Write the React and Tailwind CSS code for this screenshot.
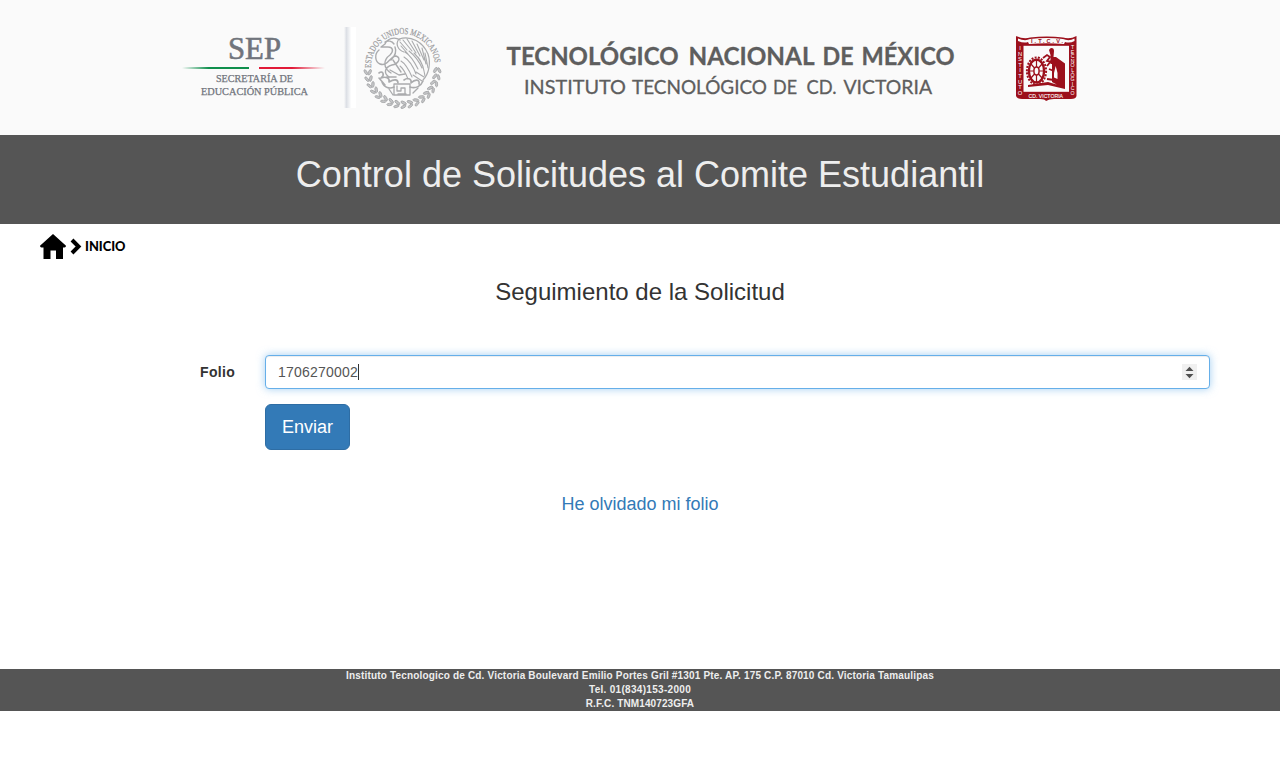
const sans = "font-['Liberation_Sans',Arial,sans-serif]";

function SepLogo() {
  return (
    <svg className="block h-[70px] w-[144px] shrink-0 overflow-visible" viewBox="0 0 144 70" role="img" aria-label="SEP">
      <defs>
        <linearGradient id="green" x1="0" x2="1">
          <stop offset="0" stopColor="#0f8f4d" stopOpacity="0" />
          <stop offset="0.4" stopColor="#0f8f4d" />
          <stop offset="1" stopColor="#0f8f4d" />
        </linearGradient>
        <linearGradient id="red" x1="0" x2="1">
          <stop offset="0" stopColor="#e11a38" />
          <stop offset="0.5" stopColor="#e11a38" />
          <stop offset="1" stopColor="#e11a38" stopOpacity="0" />
        </linearGradient>
      </defs>
      <g fill="#70747c" stroke="#70747c" fontFamily="'Liberation Serif', serif">
        <text x="46" y="25" fontSize="32" strokeWidth="0.6" textLength="53" lengthAdjust="spacingAndGlyphs">SEP</text>
        <text x="34" y="48" fontSize="10.6" strokeWidth="0.25" textLength="77" lengthAdjust="spacingAndGlyphs">SECRETARÍA DE</text>
        <text x="19" y="61" fontSize="10.6" strokeWidth="0.25" textLength="107" lengthAdjust="spacingAndGlyphs">EDUCACIÓN PÚBLICA</text>
      </g>
      <rect x="0" y="33" width="67" height="2" fill="url(#green)" />
      <rect x="77" y="33" width="66" height="2" fill="url(#red)" />
    </svg>
  );
}

const leaves = Array.from({ length: 17 }, (_, i) => 2 + i * 11);

function Seal() {
  return (
    <svg className="block h-[84px] w-[80px] shrink-0 overflow-visible" viewBox="0 0 80 84" role="img" aria-label="Estados Unidos Mexicanos">
      <defs>
        <path id="sealArc" d="M8 43 A32 33 0 1 1 72 41" />
      </defs>
      <text fill="#98999b" stroke="#98999b" strokeWidth="0.2" fontSize="9" fontFamily="'Liberation Serif', serif">
        <textPath href="#sealArc" textLength="99" lengthAdjust="spacingAndGlyphs">ESTADOS UNIDOS MEXICANOS</textPath>
      </text>
      <g fill="#c4c5c7" stroke="#a4a5a7" strokeWidth="0.8">
        {leaves.map((a) => (
          <g key={a} transform={`rotate(${a} 39.5 45) translate(74.5 45)`}>
            <ellipse cx="-2.4" cy="0" rx="1.3" ry="3" transform="rotate(28)" />
            <ellipse cx="2" cy="0" rx="1.2" ry="2.8" transform="rotate(-28)" />
          </g>
        ))}
      </g>
      <g fill="none" stroke="#aaabad" strokeLinecap="round" strokeLinejoin="round">
        <path d="M36 14 C48 10 60 17 65 29 C68 38 66 49 60 55 M36 14 C32 19 35 25 41 27" strokeWidth="1.2" />
        <path d="M37 17 L44 25 M40 15 L49 26 M44 14 L53 28 M49 16 L57 31 M54 19 L61 35 M59 23 L63 39 M62 28 L65 43 M38 21 L45 29 M42 27 C47 30 51 36 55 44 M46 26 C51 30 56 36 59 43 M51 28 C56 33 60 39 61 46 M55 32 C60 38 61 45 62 51 M41 32 C46 35 50 41 53 49 M38 36 C43 39 46 45 49 52 M37 41 C41 44 43 49 45 54 M53 47 L61 52 M50 50 L59 56" strokeWidth="1.1" />
        <path d="M37 15 C31 11 24 14 22 19 L18 22 L25 22 C30 22 31 26 27 30 C20 35 20 43 28 48 M22 17 C25 15 29 16 31 19 M16 25 C11 29 12 37 17 39 C25 42 27 31 33 31 C39 33 35 39 29 40 C22 42 20 48 26 52 M32 22 C34 27 32 31 28 35 M27 45 L36 50 L42 49 M30 35 L38 47" strokeWidth="1.4" />
        <path d="M16 48 C20 45 22 50 18 53 C23 51 27 53 26 57 C31 54 35 54 35 58 M41 55 C45 52 49 54 48 58 C52 54 57 54 56 59 M24 52 L33 52 M19 57 C21 63 27 64 31 62 M47 62 C53 64 58 61 60 56 M16 53 L22 60" strokeWidth="1.6" />
        <path d="M31 59 H47 V70 H31 Z M34 61 V66 H38 V63 H42 V68 M26 64 L30 70 M50 68 L55 63 M35 69 H43" strokeWidth="1.3" />
      </g>
    </svg>
  );
}

function Crest() {
  return (
    <svg className="block h-[66px] w-[62px] shrink-0" viewBox="0 0 62 66" role="img" aria-label="Instituto Tecnológico Cd. Victoria">
      <path d="M0 0 Q8 3.5 14 1.5 Q31 -0.5 47 1.5 Q54 3.5 60.5 0 V60 Q60 63 55 63 H38 Q33 63 30 65 Q29 63 24 63 H6 Q1 63 0 60 Z" fill="#9c101c" />
      <path d="M2 2.5 Q9 5.5 14 3 Q31 1 47 3 Q53 5.5 58.5 2.5 V5 Q54 7.5 49 6 L48 8 Q31 6.5 13 8 L12 6 Q8 7.5 2 5 Z" fill="#fafafa" />
      <rect x="7.5" y="9.8" width="45.5" height="46" fill="#fafafa" />
      <g fontFamily="'Liberation Sans', Arial, sans-serif">
        <text x="15" y="7.4" fontSize="5.6" fontWeight="bold" fill="#9c101c" textLength="32" lengthAdjust="spacing">I.T.C.V.</text>
        <text x="12.5" y="61.5" fontSize="6" fill="#ffffff" stroke="#ffffff" strokeWidth="0.1" textLength="34.5" lengthAdjust="spacingAndGlyphs">CD. VICTORIA</text>
        <g fill="#ffffff" fontSize="5.8" textAnchor="middle">
          {"INSTITUTO".split("").map((c, i) => <text key={i} x="4" y={14 + i * 5.6}>{c}</text>)}
        </g>
        <g fill="#ffffff" fontSize="5.2" textAnchor="middle">
          {"TECNOLÓGICO".split("").map((c, i) => <text key={i} x="56.6" y={13 + i * 4.6}>{c}</text>)}
        </g>
      </g>
      <g fill="none" stroke="#9c101c">
        <ellipse cx="20.5" cy="35" rx="7.6" ry="11.4" strokeWidth="2.4" />
        <ellipse cx="20.5" cy="35" rx="9.6" ry="13.6" strokeWidth="2" strokeDasharray="2 1.3" />
        <ellipse cx="20.5" cy="35" rx="2.6" ry="4" strokeWidth="1.5" />
        <path d="M20.5 24 V31 M20.5 39 V46 M13 35 H17.5 M23.5 35 H28 M15 28 L18.5 32 M26 28 L22.5 32 M15 42 L18.5 38 M26 42 L22.5 38" strokeWidth="1.2" />
        <path d="M27 22 L31 19 L34 21 L31 25 L36 26 M31 30 L36 24 L40 25 M33 33 L38 35 M31 43 L38 44" strokeWidth="1.8" />
      </g>
      <path d="M33 14 Q34 12 35.5 12 Q38 12 38 15 L37.5 21 H40 L49 27.5 V53 L36 46 V28 H34.5 V19 Z M12 49 L32 46 L49 51 V53 L32 49 L12 51 Z" fill="#9c101c" />
      <path d="M38 37 L39.7 30 L41.5 37 V43 L38 41.5 Z" fill="#fafafa" />
    </svg>
  );
}

const line1 = [["TECNOLÓGICO", 0.5, 172], ["NACIONAL", 182.5, 126], ["DE", 316.5, 31], ["MÉXICO", 355.5, 93]];
const line2 = [["INSTITUTO", 18, 102], ["TECNOLÓGICO", 126, 135], ["DE", 267, 24], ["CD.", 300.5, 30], ["VICTORIA", 337.5, 88.5]];

function Institution() {
  return (
    <svg className="block h-[60px] w-[450px] shrink-0 overflow-visible" viewBox="0 0 450 60">
      <g fill="#5e5e5e" stroke="#5e5e5e" fontFamily="Lato, 'Open Sans', sans-serif">
        {line1.map(([word, x, width]) => (
          <text key={word} x={x} y="26.3" fontSize="24.8" fontWeight="700" strokeWidth="0.3" textLength={width} lengthAdjust="spacingAndGlyphs">{word}</text>
        ))}
        {line2.map(([word, x, width]) => (
          <text key={word} x={x} y="55" fontSize="19.6" strokeWidth="0.3" textLength={width} lengthAdjust="spacingAndGlyphs">{word}</text>
        ))}
      </g>
    </svg>
  );
}

function Breadcrumb() {
  return (
    <nav className="flex h-[45px] items-center pl-10">
      <svg className="h-[27px] w-[86px]" viewBox="0 0 86 27">
        <path d="M13 1 L26 12.7 Q26 14.5 24.5 14.5 H23 V26 H16 V17.5 H10.5 V26 H3.5 V14.5 H1.5 Q0 14.5 0 12.7 Z" fill="#000" />
        <path d="M32 7 L38.5 13.5 L32 20" fill="none" stroke="#000" strokeWidth="4" />
        <text x="45" y="18" fontSize="13" fontWeight="900" fontFamily="Lato, sans-serif" textLength="40.5" lengthAdjust="spacingAndGlyphs">INICIO</text>
      </svg>
    </nav>
  );
}

export default function App() {
  return (
    <div className={`${sans} flex min-h-[767px] flex-col bg-white text-sm leading-5 text-[#333]`}>
      <header className="flex h-[135px] bg-[#fafafa] pl-[182px]">
        <div className="pt-[34px]"><SepLogo /></div>
        <div className="mt-[27px] ml-[18px] h-[81px] w-[12px] bg-linear-to-r from-[#fafafa] via-[#dcdfe5] via-20% to-white to-60%" />
        <div className="ml-[7px] pt-[25px]"><Seal /></div>
        <div className="ml-[63px] pt-[39px]"><Institution /></div>
        <div className="ml-[60px] pt-[36px]"><Crest /></div>
      </header>
      <div className="h-[89px] bg-[#555] pt-5 text-center">
        <h1 className="text-4xl leading-[39px] text-[#eee]">Control de Solicitudes al Comite Estudiantil</h1>
      </div>
      <Breadcrumb />
      <main className="flex h-[400px] flex-col">
        <h2 className="mt-2.5 text-center text-2xl leading-[26px]">Seguimiento de la Solicitud</h2>
        <form className="mt-[50px] grid grid-cols-[235px_945px] gap-x-[30px] gap-y-[15px]" onSubmit={(e) => e.preventDefault()}>
          <label className="pt-[7px] text-right font-bold tracking-[0.3px]">Folio</label>
          <div className="flex h-[34px] items-center justify-between rounded-sm border border-[#66afe9] bg-white pr-3 pl-3 text-[#555] shadow-[inset_0_1px_1px_rgba(0,0,0,0.075),0_0_8px_rgba(102,175,233,0.6)]">
            <div className="flex items-center">
              <span className="tracking-[0.21px]">1706270002</span>
              <span className="h-4 w-px bg-[#333]" />
            </div>
            <svg className="h-4 w-[15px]" viewBox="0 0 15 16">
              <rect width="15" height="16" fill="#f0f0f0" />
              <path d="M3.5 7 L7.5 2.8 L11.5 7 Z M3.5 10 L7.5 14.2 L11.5 10 Z" fill="#505050" />
            </svg>
          </div>
          <button className="col-start-2 h-[46px] w-[85px] rounded-md border border-[#2e6da4] bg-[#337ab7] text-lg text-white">Enviar</button>
        </form>
        <a className="mt-[44px] text-center text-lg leading-5 text-[#337ab7]" href="#folio">He olvidado mi folio</a>
      </main>
      <footer className="h-[42px] bg-[#555] text-center text-[10px] leading-[14px] font-bold text-[#eee]">
        <p className="tracking-[0.175px]">Instituto Tecnologico de Cd. Victoria Boulevard Emilio Portes Gril #1301 Pte. AP. 175 C.P. 87010 Cd. Victoria Tamaulipas</p>
        <p className="tracking-[0.3px]">Tel. 01(834)153-2000</p>
        <p className="tracking-[0.12px]">R.F.C. TNM140723GFA</p>
      </footer>
    </div>
  );
}
